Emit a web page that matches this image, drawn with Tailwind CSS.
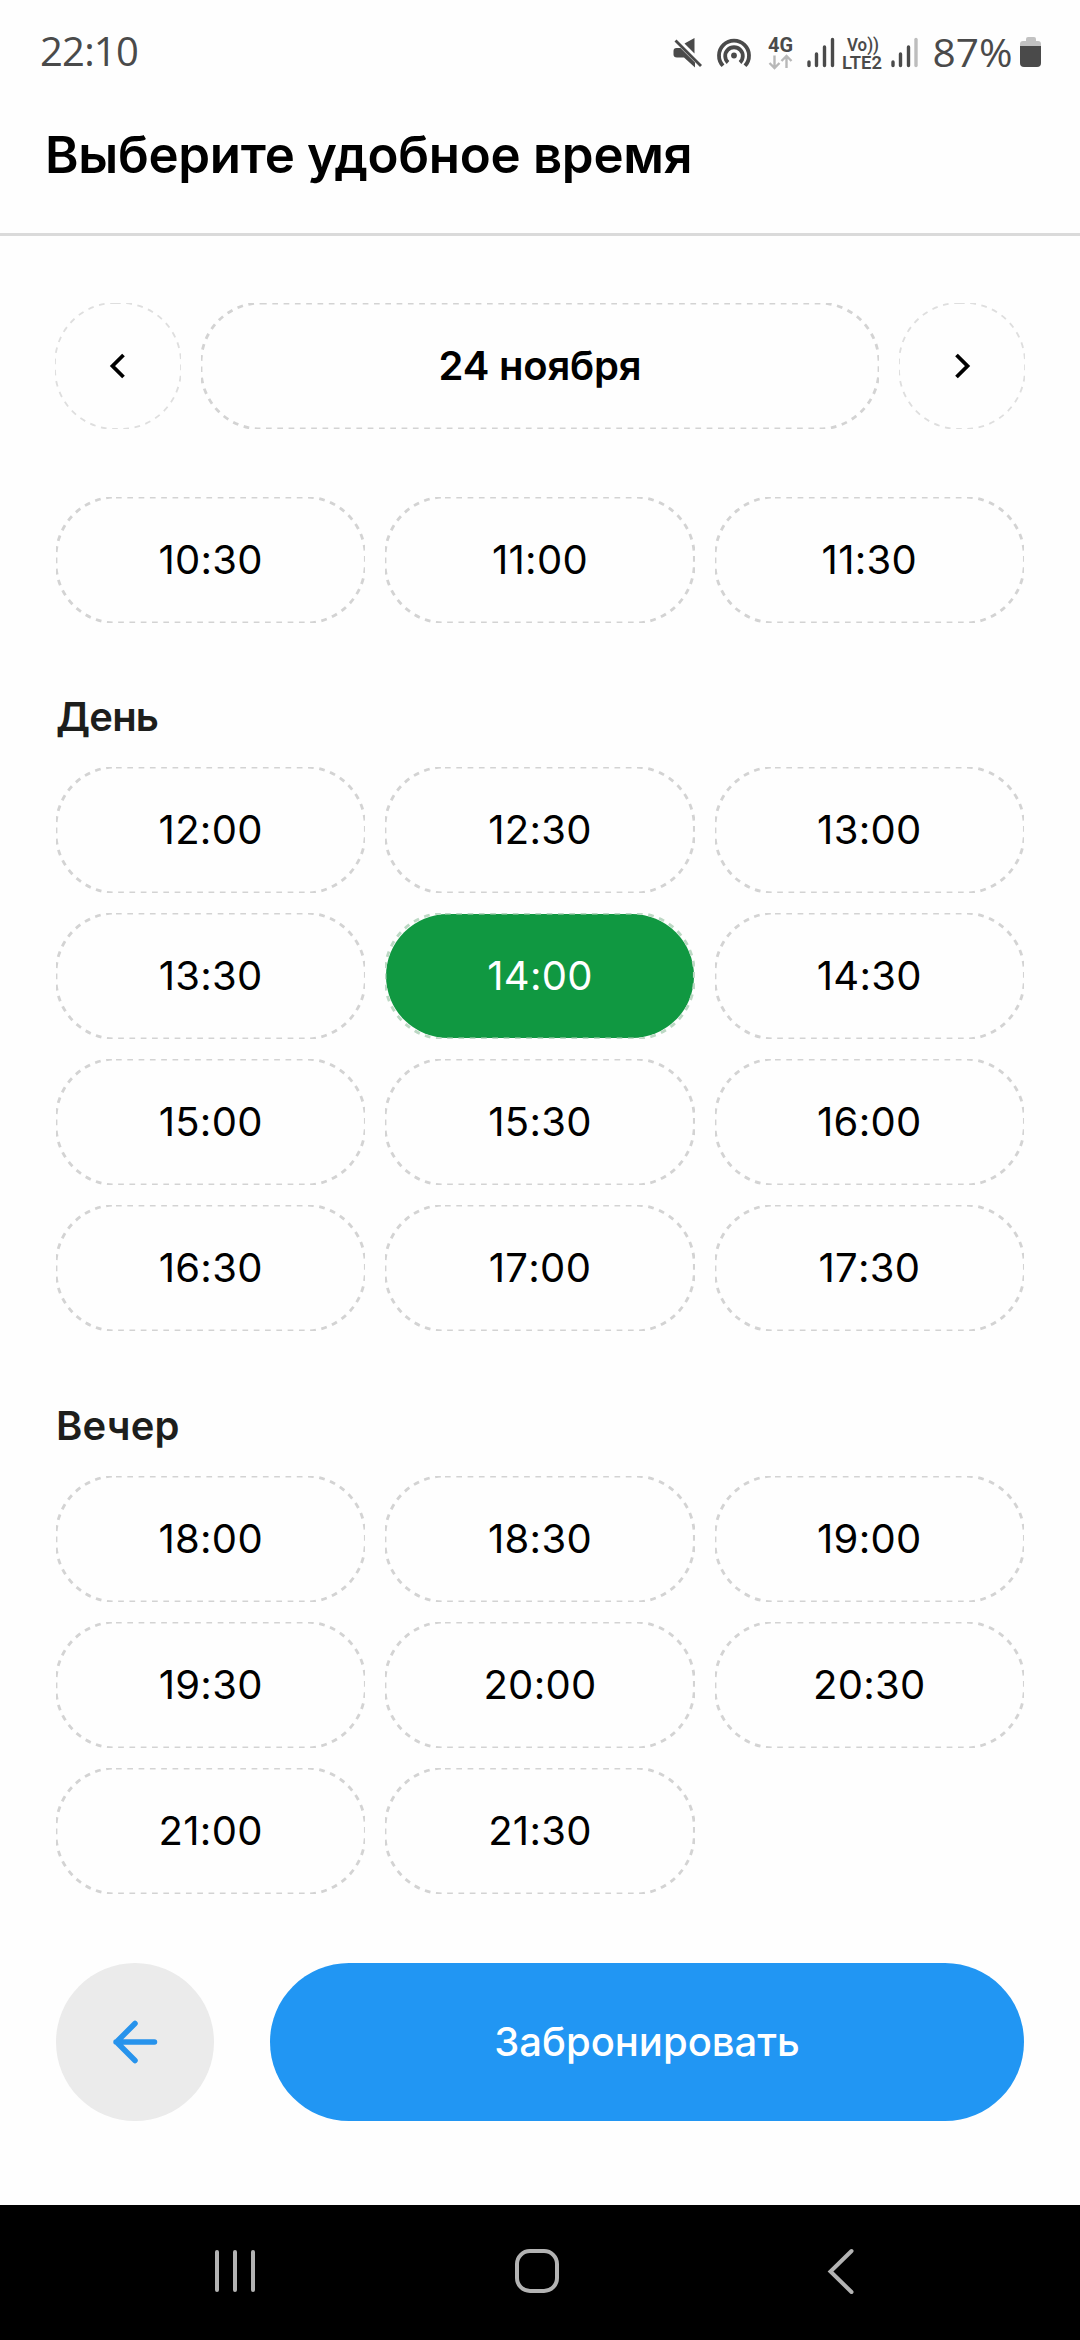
<!DOCTYPE html>
<html lang="ru">
<head>
    <meta charset="UTF-8">
    <meta name="viewport" content="width=device-width, initial-scale=1.0">
    <title>Выберите удобное время</title>
    <script src="https://cdn.jsdelivr.net/npm/@tailwindcss/browser@4"></script>
</head>
<body class="bg-[#fefefe] font-['Inter','Liberation_Sans',sans-serif] text-black">
    <div class="w-[1080px] h-[2340px] flex flex-col overflow-hidden">
        <!-- Status bar -->
        <div class="h-[104px] shrink-0 flex items-center justify-between pl-[40px] pr-[39px] text-[#4a4a4a]">
            <span class="font-['Open_Sans',sans-serif] text-[40px] leading-[56px] tracking-[-0.8px] pb-[2px]">22:10</span>
            <svg class="w-[370px] h-[60px]" viewBox="670 21 370 60" fill="none">
                <path d="M693.500 37v15.500l-10-10zM672.500 50q0-3 3-3h4l14.500 14.500v5l-11-10h-7q-3.500 0-3.500-3z" fill="#4a4a4a"/>
                <path d="M674.500 39.500L700 65" stroke="#4a4a4a" stroke-width="2.800"/>
                <path d="M722 64.800A15 15 0 1 1 744 64.800M727 61.500A8.800 8.800 0 1 1 739 61.500" stroke="#4a4a4a" stroke-width="3.800"/>
                <circle cx="733" cy="54.500" r="2.900" fill="#4a4a4a"/>
                <text x="767" y="51" font-size="20" font-weight="700" fill="#4a4a4a" font-family="Roboto" textLength="25" lengthAdjust="spacingAndGlyphs">4G</text>
                <path d="M773.500 54.500v12M768.500 62l5 5 5-5M785.500 67v-12M780.500 60l5-5 5 5" stroke="#b8b8b8" stroke-width="2.400"/>
                <path d="M808 61v3.500M815.500 53v11.500M823.500 46v18.500M831.500 38.500v26M892 61v3.500M899.500 53v11.500M907.500 46v18.500" stroke="#4a4a4a" stroke-width="3.400" stroke-linecap="round"/>
                <path d="M915 38.500v26" stroke="#bdbdbd" stroke-width="3.400" stroke-linecap="round"/>
                <text x="846" y="50" font-size="18" font-weight="600" fill="#4a4a4a" font-family="Roboto" textLength="32" lengthAdjust="spacingAndGlyphs">Vo))</text>
                <text x="841" y="67.500" font-size="18" font-weight="600" fill="#4a4a4a" font-family="Roboto" textLength="40" lengthAdjust="spacingAndGlyphs">LTE2</text>
                <text x="931.500" y="66" font-size="39" fill="#4a4a4a" font-family="Open Sans" textLength="80" lengthAdjust="spacingAndGlyphs">87%</text>
                <path d="M1019 46v-3q0-3 3-3h3v-2q0-2 2-2h6q2 0 2 2v2h2q3 0 3 3v3z" fill="#c2c2c2"/>
                <path d="M1019 45h21v17q0 4-4 4h-13q-4 0-4-4z" fill="#4a4a4a"/>
            </svg>
        </div>

        <!-- Header -->
        <header class="h-[132px] shrink-0 border-b-3 border-[#dadada] pl-[45px] pt-[20px]">
            <h1 class="text-[51px] leading-[62px] font-semibold tracking-[-0.3px] whitespace-nowrap">Выберите удобное время</h1>
        </header>

        <main class="px-[56px] pt-[67px] flex flex-col">
            <!-- Date switcher -->
            <div class="flex gap-[20px] h-[126px] -mx-px">
                <button class="slot relative w-[126px] flex items-center justify-center" data-color="#dedede" data-width="1.8">
                    <svg class="w-[30px] h-[30px]" viewBox="0 0 30 30" fill="none"><path d="M20.500 4L9.500 15l11 11" stroke="#000" stroke-width="3.800"/></svg>
                </button>
                <button class="slot relative flex-1 text-[40px] font-semibold tracking-[-0.2px]" data-color="#d3d3d3" data-width="2.8">24 ноября</button>
                <button class="slot relative w-[126px] flex items-center justify-center" data-color="#dedede" data-width="1.8">
                    <svg class="w-[30px] h-[30px]" viewBox="0 0 30 30" fill="none"><path d="M9.500 4l11 11-11 11" stroke="#000" stroke-width="3.800"/></svg>
                </button>
            </div>

            <div class="grid grid-cols-3 gap-[20px] mt-[68px]" data-times="10:30 11:00 11:30"></div>

            <h2 class="mt-[69px] h-[50px] leading-[50px] text-[40px] font-semibold tracking-[-0.8px] text-[#1d1e1c]">День</h2>
            <div class="grid grid-cols-3 gap-[20px] mt-[25px]" data-times="12:00 12:30 13:00 13:30 14:00 14:30 15:00 15:30 16:00 16:30 17:00 17:30"></div>

            <h2 class="mt-[70px] h-[50px] leading-[50px] text-[40px] font-semibold tracking-[0.2px] text-[#1d1e1c]">Вечер</h2>
            <div class="grid grid-cols-3 gap-[20px] mt-[25px]" data-times="18:00 18:30 19:00 19:30 20:00 20:30 21:00 21:30"></div>
        </main>

        <!-- Actions -->
        <div class="flex gap-[56px] px-[56px] mt-[69px]">
            <button class="w-[158px] h-[158px] rounded-full bg-[#ebebeb] flex items-center justify-center">
                <svg class="w-[48px] h-[48px]" viewBox="0 0 48 48" fill="none" stroke="#2793ec" stroke-width="5.500" stroke-linecap="round" stroke-linejoin="round"><path d="M43.500 24H5M24 5.500L5.500 24 24 42.500"/></svg>
            </button>
            <button class="flex-1 h-[158px] rounded-full bg-[#2196f3] text-white text-[40px] font-medium">Забронировать</button>
        </div>

        <!-- System navigation -->
        <nav class="mt-auto h-[135px] shrink-0 bg-black">
            <svg class="w-full h-full" viewBox="0 2205 1080 135" fill="none" stroke="#b3b3b3" stroke-width="4" stroke-linecap="round">
                <path d="M217 2252v38M235 2252v38M253 2252v38M851.500 2251l-21 20.500 21 20.500"/>
                <rect x="517" y="2251" width="40" height="40" rx="13"/>
            </svg>
        </nav>
    </div>

    <script>
        const selected = '14:00';

        document.querySelectorAll('[data-times]').forEach((grid) => {
            grid.dataset.times.split(' ').forEach((time) => {
                const btn = document.createElement('button');
                btn.className = 'slot relative h-[126px] text-[40px] font-[370] tracking-[0.3px] [font-kerning:none]';
                if (time === selected) {
                    btn.className += ' rounded-full bg-[#109841] bg-clip-content p-px text-white';
                }
                btn.dataset.color = time === selected ? '#bcd8c4' : '#d3d3d3';
                btn.dataset.width = 2.8;
                btn.textContent = time;
                grid.appendChild(btn);
            });
        });

        // dashed outline, the outer half of the stroke is cut by the svg box
        document.querySelectorAll('.slot').forEach((btn) => {
            btn.insertAdjacentHTML('beforeend', `
                <svg class="absolute inset-0 w-full h-full overflow-hidden" fill="none">
                    <rect width="100%" height="100%" rx="60"
                          stroke="${btn.dataset.color}" stroke-width="${btn.dataset.width}" stroke-dasharray="5.7 5.6"/>
                </svg>`);
        });
    </script>
</body>
</html>
